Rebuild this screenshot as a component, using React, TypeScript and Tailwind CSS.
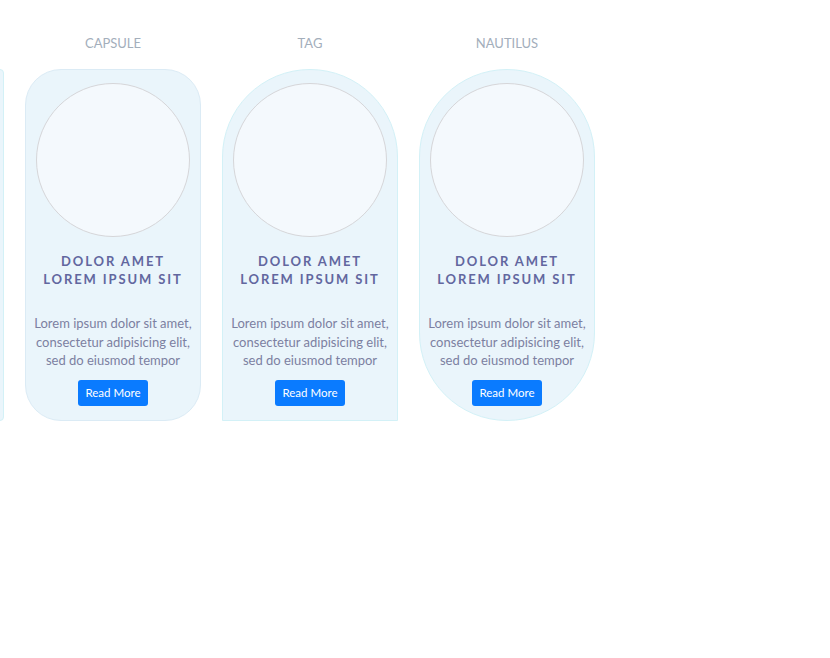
const shapes = [
  { label: "", card: "rounded-r-[4px] border-[#d3f1f7]", empty: true },
  { label: "CAPSULE", card: "rounded-[36px] border-[#dbebf5]", empty: false },
  { label: "TAG", card: "rounded-t-[88px] border-[#d3f1f7]", empty: false },
  { label: "NAUTILUS", card: "rounded-[88px] border-[#d3f1f7]", empty: false },
];

function Card({ className, empty }: { className: string; empty: boolean }) {
  return (
    <div
      className={`flex h-[352px] w-[176px] flex-col items-center border bg-[#eaf5fb] px-[10px] pt-[13px] ${className}`}
    >
      {!empty && (
        <>
          {/* avatar placeholder */}
          <div className="h-[154px] w-[154px] shrink-0 rounded-full border border-[#d6d6d9] bg-[#f4f9fd]" />
          <h3 className="mt-[15px] text-center text-[13px] font-bold leading-[18px] tracking-[1.9px] text-[#62679f]">
            DOLOR AMET
            <br />
            LOREM IPSUM SIT
          </h3>
          <p className="-mx-[6px] mt-[26px] text-center text-[13px] leading-[18.5px] text-[#7c80a1]">
            Lorem ipsum dolor sit amet, consectetur adipisicing elit, sed do eiusmod tempor
          </p>
          <button className="mt-[10px] h-[26px] w-[70px] rounded-[3px] bg-[#0a7bff] text-[11.5px] text-white">
            Read More
          </button>
        </>
      )}
    </div>
  );
}

export default function App() {
  return (
    <div className="min-h-[658px] w-[830px] overflow-hidden bg-white font-['Lato',sans-serif]">
      <div className="ml-[-172px] flex gap-[21px] pt-[34px]">
        {shapes.map((s, i) => (
          <div key={i} className="flex w-[176px] shrink-0 flex-col items-center">
            <div className="h-[18px] text-[13px] leading-[18px] text-[#a3aebb]">{s.label}</div>
            <div className="mt-[17px]">
              <Card className={s.card} empty={s.empty} />
            </div>
          </div>
        ))}
      </div>
    </div>
  );
}
